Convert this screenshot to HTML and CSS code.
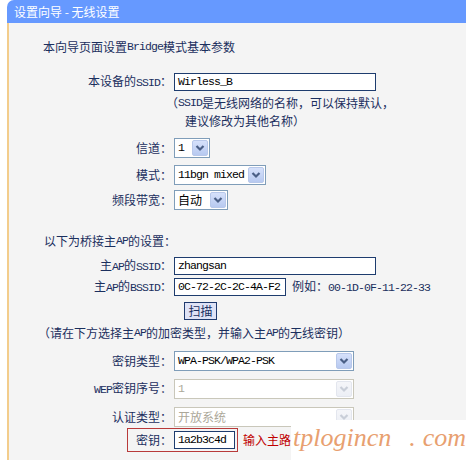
FILE: index.html
```html
<!DOCTYPE html>
<html lang="zh-CN">
<head>
<meta charset="utf-8">
<title>设置向导 - 无线设置</title>
<link rel="stylesheet" href="styles.css">
</head>
<body>
<div class="panel">
  <div class="hd">设置向导 - 无线设置</div>
  <div class="bd">
    <div class="row r-intro txt-intro">本向导页面设置<span class="m">Bridge</span>模式基本参数</div>

    <div class="row r-ssid">
      <span class="lbl">本设备的<span class="m">SSID</span>：</span>
      <div class="inp w-ssid"><span class="m">Wirless_B</span></div>
    </div>
    <div class="row r-note1 txt-note1">（<span class="m">SSID</span>是无线网络的名称，可以保持默认，</div>
    <div class="row r-note2 txt-note2">建议修改为其他名称）</div>

    <div class="row r-ch">
      <span class="lbl">信道：</span>
      <div class="sel w-ch"><span class="val m">1</span><span class="arr"><svg viewBox="0 0 14 16" width="14" height="16"><path d="M3.5 6 L7 9.5 L10.5 6" fill="none" stroke="#4a5f86" stroke-width="2.2"/></svg></span></div>
    </div>
    <div class="row r-mode">
      <span class="lbl">模式：</span>
      <div class="sel w-mode"><span class="val m">11bgn mixed</span><span class="arr"><svg viewBox="0 0 14 16" width="14" height="16"><path d="M3.5 6 L7 9.5 L10.5 6" fill="none" stroke="#4a5f86" stroke-width="2.2"/></svg></span></div>
    </div>
    <div class="row r-bw">
      <span class="lbl">频段带宽：</span>
      <div class="sel w-bw"><span class="val">自动</span><span class="arr"><svg viewBox="0 0 14 16" width="14" height="16"><path d="M3.5 6 L7 9.5 L10.5 6" fill="none" stroke="#4a5f86" stroke-width="2.2"/></svg></span></div>
    </div>

    <div class="row r-sec2 txt-sec2">以下为桥接主<span class="m">AP</span>的设置：</div>

    <div class="row r-apssid">
      <span class="lbl">主<span class="m">AP</span>的<span class="m">SSID</span>：</span>
      <div class="inp w-ssid"><span class="m">zhangsan</span></div>
    </div>
    <div class="row r-bssid">
      <span class="lbl">主<span class="m">AP</span>的<span class="m">BSSID</span>：</span>
      <div class="inp w-bssid"><span class="m">0C-72-2C-2C-4A-F2</span></div>
      <span class="eg">例如：<span class="m">00-1D-0F-11-22-33</span></span>
    </div>
    <div class="row r-scan">
      <span class="btn">扫描</span>
    </div>
    <div class="row r-note txt-note">（请在下方选择主<span class="m">AP</span>的加密类型，并输入主<span class="m">AP</span>的无线密钥）</div>

    <div class="row r-keytype">
      <span class="lbl">密钥类型：</span>
      <div class="sel w-key"><span class="val m">WPA-PSK/WPA2-PSK</span><span class="arr"><svg viewBox="0 0 14 16" width="14" height="16"><path d="M3.5 6 L7 9.5 L10.5 6" fill="none" stroke="#4a5f86" stroke-width="2.2"/></svg></span></div>
    </div>
    <div class="row r-wep">
      <span class="lbl"><span class="m">WEP</span>密钥序号：</span>
      <div class="sel w-key dis"><span class="val m">1</span><span class="arr"><svg viewBox="0 0 14 16" width="14" height="16"><path d="M3.5 6 L7 9.5 L10.5 6" fill="none" stroke="#c9ced8" stroke-width="2.2"/></svg></span></div>
    </div>
    <div class="row r-auth">
      <span class="lbl">认证类型：</span>
      <div class="sel w-key dis"><span class="val">开放系统</span><span class="arr"><svg viewBox="0 0 14 16" width="14" height="16"><path d="M3.5 6 L7 9.5 L10.5 6" fill="none" stroke="#c9ced8" stroke-width="2.2"/></svg></span></div>
    </div>
    <div class="row r-key">
      <div class="redbox">
        <span class="lbl-k">密钥：</span>
        <div class="inp w-pwd"><span class="m">1a2b3c4d</span></div>
      </div>
      <span class="hint">输入主路</span>
    </div>
  </div>
</div>
<div class="wm"><span>tplogincn</span><span class="dot">.</span><span class="com">com</span></div>
</body>
</html>
```

FILE: styles.css
```css
html, body {
  margin: 0;
  padding: 0;
  background: #ffffff;
}
body {
  width: 466px;
  height: 460px;
  overflow: hidden;
  position: relative;
  font-family: "Noto Sans CJK SC", "Noto Sans", sans-serif;
  font-size: 12px;
  color: #1b2f5e;
}
.panel {
  margin-left: 7px;
}
.hd {
  height: 23px;
  line-height: 23px;
  background: #6699ff;
  color: #ffffff;
  padding-left: 7px;
  border-top-left-radius: 7px;
  white-space: nowrap;
}
.bd {
  background: #f4f4f4;
  border-left: 2px solid #f3cd8c;
  height: 437px;
  display: flex;
  flex-direction: column;
}
.row {
  display: flex;
  align-items: center;
  height: 20px;
  flex: none;
  white-space: nowrap;
  line-height: 18px;
}
.m {
  font-family: "Liberation Mono", monospace;
  font-size: 11.5px;
  letter-spacing: -0.9px;
}
.lbl {
  width: 163px;
  text-align: right;
  margin-right: 2px;
  flex: none;
}

/* vertical rhythm */
.r-intro { margin-top: 14px; }
.r-ssid { margin-top: 15px; }
.r-note1 { margin-top: 2px; height: 18px; }
.r-note2 { height: 18px; }
.r-ch { margin-top: 8px; }
.r-mode { margin-top: 7px; }
.r-bw { margin-top: 5px; }
.r-sec2 { margin-top: 22px; height: 18px; }
.r-apssid { margin-top: 6px; }
.r-bssid { margin-top: 1px; }
.r-scan { margin-top: 4px; }
.r-note { margin-top: 3px; height: 18px; }
.r-keytype { margin-top: 9px; }
.r-wep { margin-top: 8px; }
.r-auth { margin-top: 8px; }
.r-key { margin-top: 1px; height: 24px; }

/* text indents */
.txt-intro { padding-left: 34px; }
.txt-note1 { padding-left: 157px; }
.txt-note2 { padding-left: 176px; }
.txt-sec2 { padding-left: 35px; }
.txt-note { padding-left: 29px; }
.r-scan { padding-left: 175px; }
.r-key { padding-left: 118px; }

/* inputs */
.inp {
  box-sizing: border-box;
  height: 18px;
  border: 1px solid #1e3c6e;
  background: #ffffff;
  color: #000000;
  padding-left: 3px;
  display: flex;
  align-items: center;
  flex: none;
  overflow: hidden;
}
.w-ssid { width: 202px; }
.w-bssid { width: 112px; }
.w-pwd { width: 61px; }

.eg {
  margin-left: 6px;
}

/* selects */
.sel {
  box-sizing: border-box;
  height: 20px;
  border: 1px solid #7f9db9;
  background: #ffffff;
  color: #000000;
  display: flex;
  align-items: center;
  flex: none;
}
.sel .val {
  flex: 1;
  padding-left: 3px;
  overflow: hidden;
}
.sel .arr {
  box-sizing: border-box;
  width: 16px;
  height: 16px;
  margin: 1px;
  border: 1px solid #b8c8ea;
  border-radius: 2px;
  background: linear-gradient(#d6e1fb, #b7c9f0);
  display: flex;
  align-items: center;
  justify-content: center;
  flex: none;
}
.sel .arr svg {
  display: block;
}
.w-ch { width: 36px; }
.w-mode { width: 92px; }
.w-bw { width: 54px; }
.w-key { width: 180px; }
.sel.dis {
  border-color: #c9c7ba;
  color: #aca899;
}
.sel.dis .arr {
  border-color: #e3e6ee;
  background: linear-gradient(#f5f6f9, #eceff5);
}

/* button */
.btn {
  box-sizing: border-box;
  width: 33px;
  height: 18px;
  border: 1px solid #1f3a6e;
  background: #dfe3f6;
  color: #1b2f5e;
  display: flex;
  align-items: center;
  justify-content: center;
}

/* key row */
.redbox {
  box-sizing: border-box;
  height: 24px;
  width: 111px;
  border: 1px solid #b83a3a;
  display: flex;
  align-items: center;
  flex: none;
}
.lbl-k {
  width: 44px;
  text-align: right;
  margin-right: 2px;
  flex: none;
}
.hint {
  margin-left: 5px;
  color: #c00000;
  flex: none;
}

/* watermark overlay */
.wm {
  position: absolute;
  left: 291px;
  top: 420px;
  width: 175px;
  height: 40px;
  background: #ffffff;
  font-family: "Liberation Serif", serif;
  font-style: italic;
  font-size: 26px;
  line-height: 36px;
  color: #e8a070;
  white-space: nowrap;
  overflow: hidden;
  padding-left: 2px;
  box-sizing: border-box;
}
.wm .dot {
  margin-left: 18px;
}
.wm .com {
  margin-left: 7px;
}
```
